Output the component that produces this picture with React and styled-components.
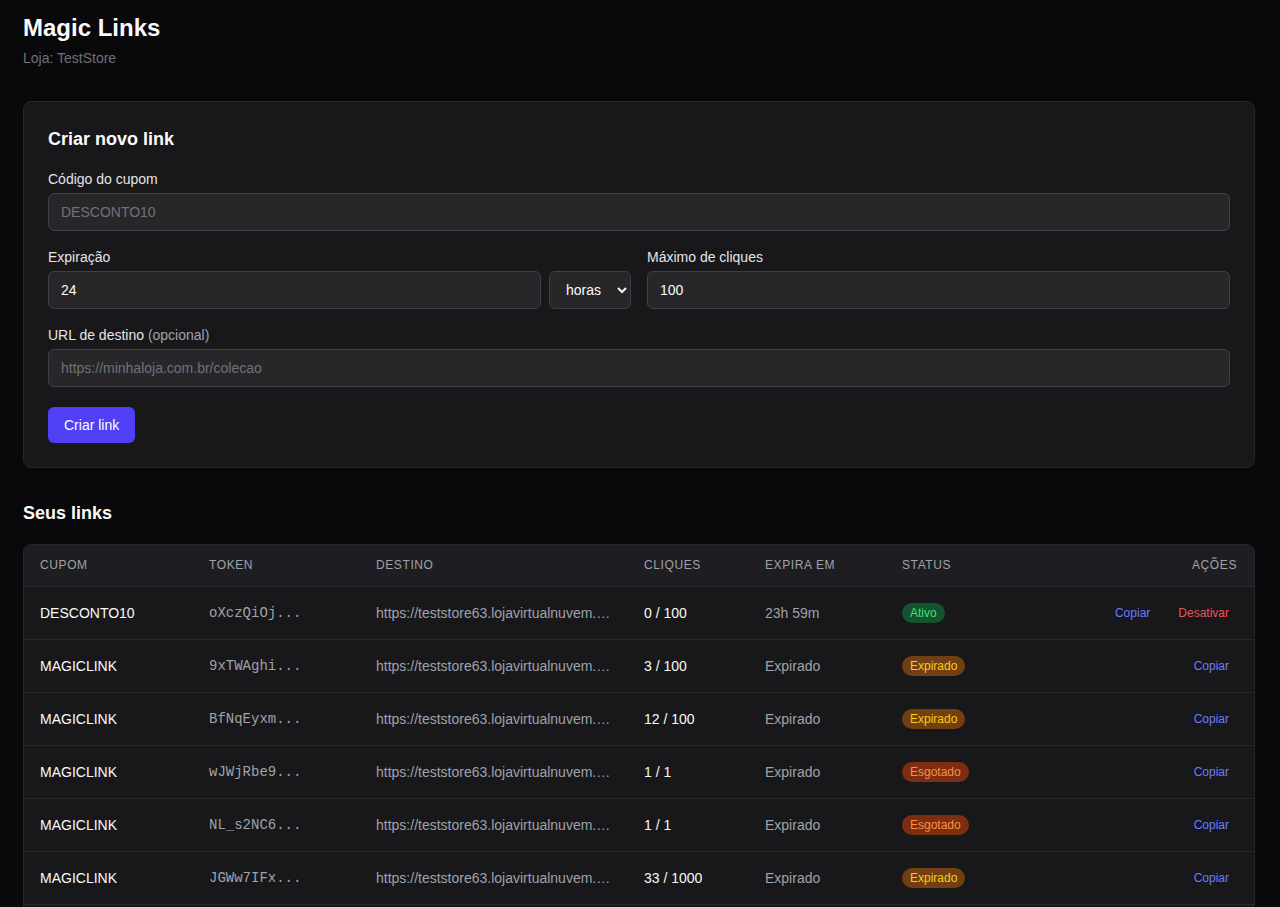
import React from 'react'
import styled, { createGlobalStyle } from 'styled-components'

const GlobalStyle = createGlobalStyle`
  * { box-sizing: border-box; }
  html, body {
    margin: 0;
    background: #09090b;
    color: #fafafa;
    font-family: "Liberation Sans", Arial, sans-serif;
    font-size: 14px;
    line-height: 1.5;
  }
`

const Page = styled.div`
  padding: 14px 25px 24px 23px;
`

const Header = styled.header`
  margin-bottom: 32px;
`

const Title = styled.h1`
  margin: 0 0 5px;
  font-size: 24px;
  line-height: 1.2;
  font-weight: 700;
`

const Subtitle = styled.p`
  margin: 0;
  color: #71717a;
  font-size: 14px;
`

const Card = styled.section`
  background: #18181b;
  border: 1px solid #27272a;
  border-radius: 8px;
  padding: 24px;
  margin-bottom: 32px;
`

const CardTitle = styled.h2`
  margin: 0 0 16px;
  font-size: 18px;
  font-weight: 700;
  line-height: 1.5;
`

const Form = styled.form`
  display: flex;
  flex-direction: column;
  gap: 16px;
`

const Row = styled.div`
  display: grid;
  grid-template-columns: 1fr 1fr;
  gap: 16px;
`

const Field = styled.div`
  display: flex;
  flex-direction: column;
`

const Label = styled.label`
  color: #e4e4e7;
  font-size: 14px;
  margin-bottom: 3px;
`

const Muted = styled.span`
  color: #a1a1aa;
`

const Inline = styled.div`
  display: grid;
  grid-template-columns: 1fr 82px;
  gap: 8px;
`

const Input = styled.input`
  display: block;
  height: 38px;
  width: 100%;
  min-width: 0;
  background: #27272a;
  border: 1px solid #3f3f46;
  border-radius: 6px;
  padding: 0 12px;
  color: #fafafa;
  font-family: inherit;
  font-size: 14px;
  outline: none;
  &::placeholder { color: #71717a; }
`

const Select = styled.select`
  height: 38px;
  width: 82px;
  background: #27272a;
  border: 1px solid #3f3f46;
  border-radius: 6px;
  padding: 0 8px 0 12px;
  color: #fafafa;
  color-scheme: dark;
  font-family: inherit;
  font-size: 14px;
`

const Button = styled.button`
  align-self: flex-start;
  margin-top: 4px;
  height: 36px;
  padding: 0 16px;
  background: #4f3ff5;
  color: #fff;
  border: none;
  border-radius: 6px;
  font-family: inherit;
  font-size: 14px;
  cursor: pointer;
`

const SectionTitle = styled.h2`
  margin: 0 0 17px;
  font-size: 18px;
  font-weight: 700;
  line-height: 1.5;
`

const TableCard = styled.div`
  background: #18181b;
  border: 1px solid #27272a;
  border-radius: 8px;
  overflow: hidden;
`

const Table = styled.table`
  width: 100%;
  border-collapse: collapse;
  table-layout: fixed;
`

const Th = styled.th`
  width: ${p => p.$w ? `${p.$w}px` : 'auto'};
  text-align: ${p => p.$right ? 'right' : 'left'};
  background: #1e1e22;
  color: #a1a1aa;
  font-size: 12px;
  line-height: 18px;
  font-weight: 400;
  letter-spacing: 0.05em;
  text-transform: uppercase;
  padding: 11px 17px 12px 16px;
  border-bottom: 1px solid #27272a;
`

const Tr = styled.tr`
  & + & td { border-top: 1px solid #27272a; }
`

const Td = styled.td`
  height: 53px;
  padding: 0 17px 0 16px;
  font-size: 14px;
  line-height: 20px;
  vertical-align: middle;
  color: ${p => p.$muted ? '#a1a1aa' : '#fafafa'};
  white-space: nowrap;
  text-align: ${p => p.$right ? 'right' : 'left'};
`

const Token = styled.span`
  font-family: "Liberation Mono", "Courier New", monospace;
  color: #a1a1aa;
`

const Dest = styled.span`
  display: block;
  max-width: 236px;
  overflow: hidden;
  text-overflow: ellipsis;
  white-space: nowrap;
  color: #a1a1aa;
`

const badgeColors = {
  Ativo: ['#14532d', '#4ade80'],
  Expirado: ['#713f12', '#facc15'],
  Esgotado: ['#7c2d12', '#fb923c'],
}

const Badge = styled.span`
  display: inline-block;
  vertical-align: top;
  padding: 1px 8px;
  border-radius: 999px;
  font-size: 12px;
  line-height: 18px;
  background: ${p => badgeColors[p.$status][0]};
  color: ${p => badgeColors[p.$status][1]};
`

const Actions = styled.div`
  display: flex;
  justify-content: flex-end;
  gap: 12px;
`

const ActionButton = styled.button`
  background: none;
  border: none;
  padding: 0 8px;
  font-family: inherit;
  font-size: 12px;
  line-height: 20px;
  color: ${p => p.$danger ? '#f05252' : '#6b7cff'};
  cursor: pointer;
`

const links = [
  { cupom: 'DESCONTO10', token: 'oXczQiOj', clicks: '0 / 100', exp: '23h 59m', status: 'Ativo' },
  { cupom: 'MAGICLINK', token: '9xTWAghi', clicks: '3 / 100', exp: 'Expirado', status: 'Expirado' },
  { cupom: 'MAGICLINK', token: 'BfNqEyxm', clicks: '12 / 100', exp: 'Expirado', status: 'Expirado' },
  { cupom: 'MAGICLINK', token: 'wJWjRbe9', clicks: '1 / 1', exp: 'Expirado', status: 'Esgotado' },
  { cupom: 'MAGICLINK', token: 'NL_s2NC6', clicks: '1 / 1', exp: 'Expirado', status: 'Esgotado' },
  { cupom: 'MAGICLINK', token: 'JGWw7IFx', clicks: '33 / 1000', exp: 'Expirado', status: 'Expirado' },
  { cupom: 'MAGICLINK', token: 'Kp3rTz8Q', clicks: '5 / 100', exp: 'Expirado', status: 'Expirado' },
]

export default function App() {
  return (
    <>
      <GlobalStyle />
      <Page>
        <Header>
          <Title>Magic Links</Title>
          <Subtitle>Loja: TestStore</Subtitle>
        </Header>

        <Card>
          <CardTitle>Criar novo link</CardTitle>
          <Form onSubmit={e => e.preventDefault()}>
            <Field>
              <Label>Código do cupom</Label>
              <Input placeholder="DESCONTO10" />
            </Field>
            <Row>
              <Field>
                <Label>Expiração</Label>
                <Inline>
                  <Input defaultValue="24" />
                  <Select defaultValue="horas">
                    <option value="horas">horas</option>
                    <option value="dias">dias</option>
                  </Select>
                </Inline>
              </Field>
              <Field>
                <Label>Máximo de cliques</Label>
                <Input defaultValue="100" />
              </Field>
            </Row>
            <Field>
              <Label>URL de destino <Muted>(opcional)</Muted></Label>
              <Input placeholder="https://minhaloja.com.br/colecao" />
            </Field>
            <Button type="submit">Criar link</Button>
          </Form>
        </Card>

        <SectionTitle>Seus links</SectionTitle>
        <TableCard>
          <Table>
            <thead>
              <tr>
                <Th $w={169}>Cupom</Th>
                <Th $w={167}>Token</Th>
                <Th $w={268}>Destino</Th>
                <Th $w={121}>Cliques</Th>
                <Th $w={137}>Expira em</Th>
                <Th $w={190}>Status</Th>
                <Th $right>Ações</Th>
              </tr>
            </thead>
            <tbody>
              {links.map((l, i) => (
                <Tr key={i}>
                  <Td>{l.cupom}</Td>
                  <Td><Token>{l.token}...</Token></Td>
                  <Td><Dest>https://teststore63.lojavirtualnuvem.com.br/produtos</Dest></Td>
                  <Td>{l.clicks}</Td>
                  <Td $muted>{l.exp}</Td>
                  <Td><Badge $status={l.status}>{l.status}</Badge></Td>
                  <Td $right>
                    <Actions>
                      <ActionButton>Copiar</ActionButton>
                      {l.status === 'Ativo' && <ActionButton $danger>Desativar</ActionButton>}
                    </Actions>
                  </Td>
                </Tr>
              ))}
            </tbody>
          </Table>
        </TableCard>
      </Page>
    </>
  )
}
